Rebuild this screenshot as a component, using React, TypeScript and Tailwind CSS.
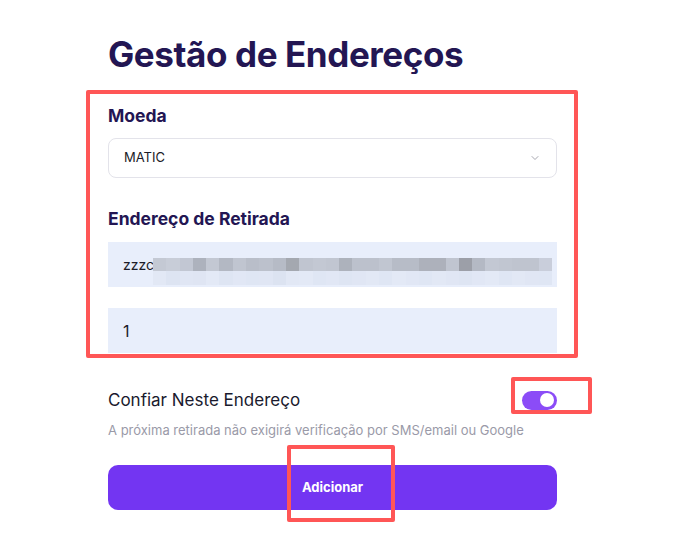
import { ChevronDown } from 'lucide-react'

const topRow = [
  '#c4c9d4', '#c8cdd8', '#c2c7d3', '#adb2bd', '#c3c8d3', '#b3b8c3', '#c0c5d0', '#b9bec9', '#bcc1cc', '#b6bbc6',
  '#a4a8b0', '#c0c5d0', '#c3c8d3', '#c1c6d1', '#adb2bc', '#bcc1cc', '#bcc1cc', '#c1c6d1', '#b7bcc7', '#b7bcc7',
  '#adb1bb', '#adb1bb', '#c0c5d0', '#9c9fa8', '#b4b9c4', '#c3c8d3', '#c1c6d1', '#bfc4cf', '#bfc4cf', '#c9cedb',
]
const bottomRow = [
  '#e2e8f5', '#dde4f2', '#e0e6f4', '#dfe5f3', '#e3e9f6', '#dee5f3', '#e1e7f5', '#dfe6f4', '#e0e6f4', '#dce3f1',
  '#e2e8f5', '#e3e9f6', '#dfe6f4', '#e1e7f5', '#dee5f3', '#e0e6f4', '#e2e8f5', '#dfe6f4', '#e3e9f6', '#e1e7f5',
  '#dfe6f4', '#e2e8f5', '#e0e6f4', '#dee5f3', '#e1e7f5', '#e3e9f6', '#dfe6f4', '#e2e8f5', '#e0e6f4', '#dfe6f4',
]

export default function App() {
  return (
    <div className="relative w-[681px] h-[546px] bg-white overflow-hidden font-['Inter',sans-serif]">
      <div className="pl-[108px] pt-[32px] w-[557px]">
        {/* Title */}
        <h1 className="text-[35px] leading-[44px] font-bold tracking-[-0.4px] text-[#231653]">Gestão de Endereços</h1>

        {/* Moeda */}
        <div className="mt-[29px] text-[17.5px] leading-[22px] font-bold text-[#231653]">Moeda</div>
        <div className="mt-[11px] h-[40px] rounded-[8px] border border-[#e3e3ea] flex items-center justify-between px-[15px]">
          <span className="text-[13px] text-[#1c1c28]">MATIC</span>
          <ChevronDown className="w-[12px] h-[12px] text-[#8a8a95]" strokeWidth={1.5} />
        </div>

        {/* Endereço */}
        <div className="mt-[30px] text-[17.5px] leading-[22px] font-bold text-[#231653]">Endereço de Retirada</div>
        <div className="relative mt-[12px] h-[45px] bg-[#e8eefb] flex items-center px-[15px]">
          <span className="text-[14px] text-[#1c1c28]">zzzc</span>
          <div className="absolute left-[45px] top-[16px] flex flex-col">
            <div className="flex">
              {topRow.map((c, i) => (
                <div key={i} className="w-[13.3px] h-[13px]" style={{ backgroundColor: c }} />
              ))}
            </div>
            <div className="flex">
              {bottomRow.map((c, i) => (
                <div key={i} className="w-[13.3px] h-[14px]" style={{ backgroundColor: c }} />
              ))}
            </div>
          </div>
        </div>
        <div className="mt-[21px] h-[45px] bg-[#e8eefb] flex items-center px-[15px]">
          <span className="text-[16px] text-[#1c1c28]">1</span>
        </div>

        {/* Confiar */}
        <div className="mt-[36px] flex items-center justify-between">
          <span className="text-[17px] leading-[22px] text-[#1a1a2e]">Confiar Neste Endereço</span>
          <div className="w-[35px] h-[19px] rounded-full bg-[#8b4cf7] flex items-center justify-end pr-[3px]">
            <div className="w-[14px] h-[14px] rounded-full bg-white" />
          </div>
        </div>
        <p className="mt-[10px] text-[13px] leading-[18px] text-[#9a9aa8]">
          A próxima retirada não exigirá verificação por SMS/email ou Google
        </p>

        <button className="mt-[26px] w-full h-[45px] rounded-[10px] bg-[#7335f2] text-white text-[13px] font-bold">
          Adicionar
        </button>
      </div>

      {/* Annotations */}
      <div className="absolute left-[86px] top-[90px] w-[492px] h-[268px] border-[4px] border-[#ff5656] rounded-[2px]" />
      <div className="absolute left-[511px] top-[377px] w-[81px] h-[37px] border-[4px] border-[#ff5656] rounded-[2px]" />
      <div className="absolute left-[287px] top-[445px] w-[108px] h-[77px] border-[4px] border-[#ff5656] rounded-[2px]" />
    </div>
  )
}
